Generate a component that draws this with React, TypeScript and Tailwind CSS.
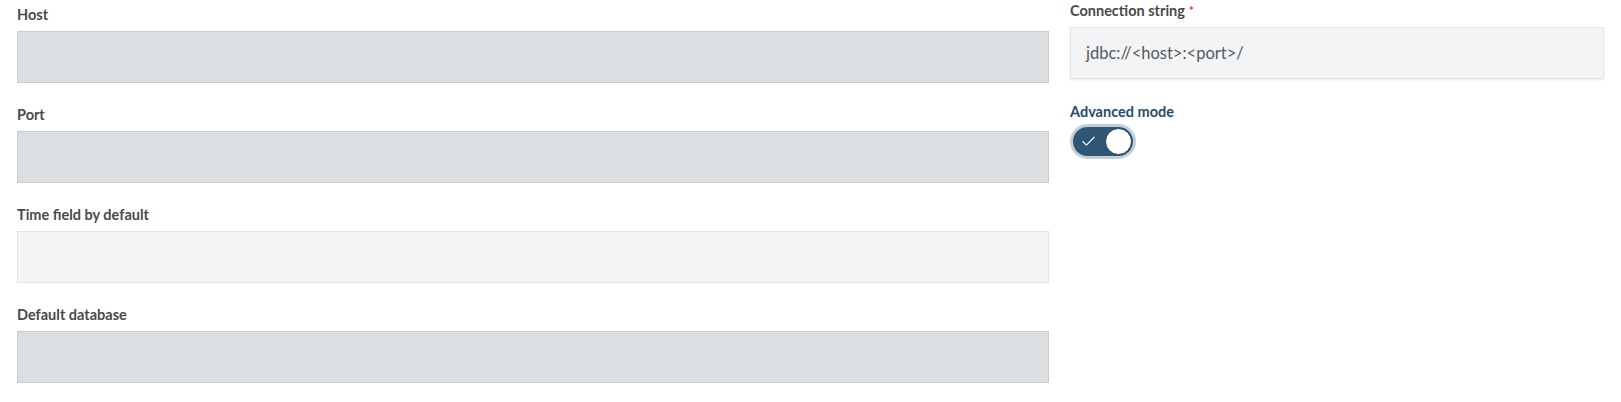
import { Check } from 'lucide-react';

const leftFields = [
  { label: 'Host', disabled: true },
  { label: 'Port', disabled: true },
  { label: 'Time field by default', disabled: false },
  { label: 'Default database', disabled: true },
];

function FieldLabel({ children, required = false }: { children: string; required?: boolean }) {
  return (
    <label className="block h-5 text-[14.5px] leading-5 font-bold text-[#4a4a4a]">
      {children}
      {required && <span className="ml-1 text-[11px] align-top text-[#d9342b]">*</span>}
    </label>
  );
}

export default function App() {
  return (
    <div
      className="flex items-start gap-[21px] bg-white px-[17px] h-[402px] w-[1621px]"
      style={{ fontFamily: 'Lato, "Open Sans", sans-serif' }}
    >
      {/* Left column */}
      <div className="flex flex-1 flex-col gap-[22px] pt-[5px]">
        {leftFields.map((field) => (
          <div key={field.label} className="flex flex-col gap-[6px]">
            <FieldLabel>{field.label}</FieldLabel>
            <div
              className={
                field.disabled
                  ? 'h-[52px] border border-[#c9cdd1] bg-[#dcdfe2]'
                  : 'h-[52px] border border-[#e2e4e7] bg-[#f3f4f6]'
              }
            />
          </div>
        ))}
      </div>

      {/* Right column */}
      <div className="flex w-[534px] flex-col pt-[1px]">
        <div className="flex flex-col gap-[6px]">
          <FieldLabel required>Connection string</FieldLabel>
          <div className="flex h-[52px] items-center border border-[#e4e6e9] bg-[#f3f4f5] px-[15px] shadow-[0_1px_2px_rgba(0,0,0,0.08)]">
            <span className="text-[16.5px] text-[#555a5f]">jdbc://&lt;host&gt;:&lt;port&gt;/</span>
          </div>
        </div>

        <div className="mt-[23px] flex flex-col gap-[2px]">
          <label className="block h-5 text-[14.5px] leading-5 font-bold text-[#2b4a69]">Advanced mode</label>
          <div className="flex h-[35px] w-[66px] items-center justify-between rounded-full border-[3px] border-[#c2ced9] bg-[#2f5675] pl-[7px] pr-[1px]">
            <Check size={17} strokeWidth={1.5} className="text-white" />
            <span className="h-[27px] w-[27px] rounded-full border border-[#1f3d55] bg-white" />
          </div>
        </div>
      </div>
    </div>
  );
}
